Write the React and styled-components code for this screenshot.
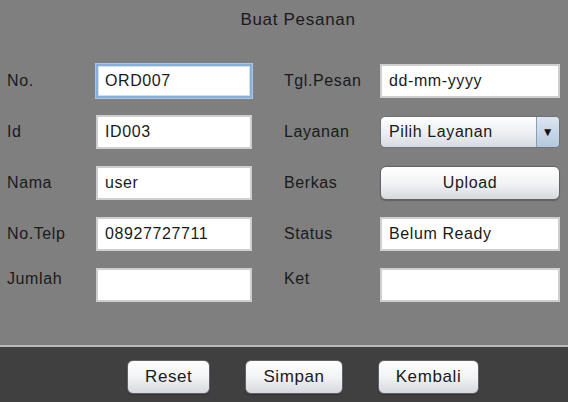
import React from "react";
import styled, { createGlobalStyle } from "styled-components";

const GlobalStyle = createGlobalStyle`
  html, body {
    margin: 0;
    padding: 0;
    background: #7f7f7f;
  }
  body {
    font-family: "Liberation Sans", Arial, sans-serif;
    color: #1a1a1a;
  }
`;

const Frame = styled.div`
  width: 568px;
  height: 402px;
  display: flex;
  flex-direction: column;
  background: #7f7f7f;
  overflow: hidden;
`;

const FormArea = styled.div`
  flex: 1;
  display: flex;
  flex-direction: column;
`;

const Title = styled.div`
  height: 40px;
  line-height: 40px;
  padding-left: 28px;
  text-align: center;
  font-size: 17px;
  letter-spacing: 0.7px;
  color: #1a1a1a;
`;

const Grid = styled.div`
  margin-top: 24px;
  padding-left: 7px;
  display: grid;
  grid-template-columns: 89px 156px 32px 96px 180px;
  grid-auto-rows: 34px;
  row-gap: 17px;
`;

const Label = styled.div`
  display: flex;
  align-items: ${(p) => (p.$top ? "flex-start" : "center")};
  padding-top: ${(p) => (p.$top ? "2px" : "0")};
  font-size: 16px;
  letter-spacing: 0.6px;
  color: #1a1a1a;
  white-space: nowrap;
`;

const Spacer = styled.div``;

const Field = styled.div`
  box-sizing: border-box;
  height: 34px;
  display: flex;
  align-items: center;
  padding-left: 7px;
  background: #fff;
  border: 2px solid ${(p) => (p.$focus ? "#86afd9" : "#cfcfcf")};
  box-shadow: ${(p) =>
    p.$focus ? "0 0 0 1px #a9c6e4, inset 0 0 0 1px #d4dde8" : "none"};
  font-size: 16px;
  letter-spacing: 0.6px;
  color: #1a1a1a;
  white-space: nowrap;
`;

const Combo = styled.div`
  box-sizing: border-box;
  height: 32px;
  margin-top: 1px;
  display: flex;
  border: 1px solid #6f7378;
  border-radius: 5px;
  overflow: hidden;
  background: linear-gradient(#ffffff, #e9ecf0 60%, #d7dbe1);
  font-size: 16px;
  letter-spacing: 0.6px;
`;

const ComboText = styled.div`
  flex: 1;
  display: flex;
  align-items: center;
  padding-left: 8px;
`;

const ComboArrow = styled.div`
  width: 22px;
  display: flex;
  align-items: center;
  justify-content: center;
  border-left: 1px solid #8a9eb3;
  background: linear-gradient(#dbe6f1, #b4c9de);
  font-size: 12px;
  color: #111;
`;

const Button = styled.div`
  box-sizing: border-box;
  height: 34px;
  padding: 0 ${(p) => p.$pad || "0"};
  display: flex;
  align-items: center;
  justify-content: center;
  border: 1px solid #5f6266;
  border-radius: 6px;
  background: linear-gradient(#ffffff, #f2f3f5 50%, #d6d9de);
  box-shadow: 0 1px 1px rgba(0, 0, 0, 0.25);
  font-size: ${(p) => p.$size || "16px"};
  letter-spacing: 0.6px;
  color: #1a1a1a;
  white-space: nowrap;
`;

const Divider = styled.div`
  height: 2px;
  background: #b9b9b9;
`;

const Footer = styled.div`
  height: 55px;
  background: #404040;
  display: flex;
  align-items: flex-start;
  padding-top: 13px;
  padding-left: 127px;
  gap: 35px;
  box-sizing: border-box;
`;

export default function App() {
  return (
    <Frame>
      <GlobalStyle />
      <FormArea>
        <Title>Buat Pesanan</Title>
        <Grid>
          <Label>No.</Label>
          <Field $focus>ORD007</Field>
          <Spacer />
          <Label>Tgl.Pesan</Label>
          <Field>dd-mm-yyyy</Field>

          <Label>Id</Label>
          <Field>ID003</Field>
          <Spacer />
          <Label>Layanan</Label>
          <Combo>
            <ComboText>Pilih Layanan</ComboText>
            <ComboArrow>▼</ComboArrow>
          </Combo>

          <Label>Nama</Label>
          <Field>user</Field>
          <Spacer />
          <Label>Berkas</Label>
          <Button>Upload</Button>

          <Label>No.Telp</Label>
          <Field>08927727711</Field>
          <Spacer />
          <Label>Status</Label>
          <Field>Belum Ready</Field>

          <Label $top>Jumlah</Label>
          <Field />
          <Spacer />
          <Label $top>Ket</Label>
          <Field />
        </Grid>
      </FormArea>
      <Divider />
      <Footer>
        <Button $pad="17px" $size="17px">Reset</Button>
        <Button $pad="17px" $size="17px">Simpan</Button>
        <Button $pad="17px" $size="17px">Kembali</Button>
      </Footer>
    </Frame>
  );
}
